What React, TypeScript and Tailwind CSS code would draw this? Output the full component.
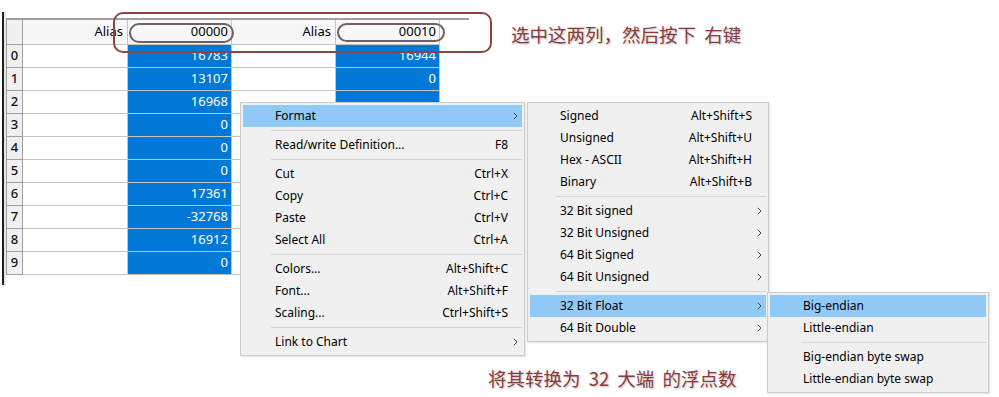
const col1 = ["16783", "13107", "16968", "0", "0", "0", "17361", "-32768", "16912", "0"];
const col2 = ["16944", "0", "", "", "", "", "", "", "", ""];

type Item = { label: string; keys?: string; sub?: boolean; on?: boolean } | "sep";

const formatMenu: Item[] = [
  { label: "Format", sub: true, on: true },
  "sep",
  { label: "Read/write Definition...", keys: "F8" },
  "sep",
  { label: "Cut", keys: "Ctrl+X" },
  { label: "Copy", keys: "Ctrl+C" },
  { label: "Paste", keys: "Ctrl+V" },
  { label: "Select All", keys: "Ctrl+A" },
  "sep",
  { label: "Colors...", keys: "Alt+Shift+C" },
  { label: "Font...", keys: "Alt+Shift+F" },
  { label: "Scaling...", keys: "Ctrl+Shift+S" },
  "sep",
  { label: "Link to Chart", sub: true },
];

const typeMenu: Item[] = [
  { label: "Signed", keys: "Alt+Shift+S" },
  { label: "Unsigned", keys: "Alt+Shift+U" },
  { label: "Hex - ASCII", keys: "Alt+Shift+H" },
  { label: "Binary", keys: "Alt+Shift+B" },
  "sep",
  { label: "32 Bit signed", sub: true },
  { label: "32 Bit Unsigned", sub: true },
  { label: "64 Bit Signed", sub: true },
  { label: "64 Bit Unsigned", sub: true },
  "sep",
  { label: "32 Bit Float", sub: true, on: true },
  { label: "64 Bit Double", sub: true },
];

const endianMenu: Item[] = [
  { label: "Big-endian", on: true },
  { label: "Little-endian" },
  "sep",
  { label: "Big-endian byte swap" },
  { label: "Little-endian byte swap" },
];

const Chevron = () => (
  <svg width="5" height="8" viewBox="0 0 5 8">
    <polyline points="0.8,0.8 4,4 0.8,7.2" fill="none" stroke="#4a4a4a" strokeWidth="1" />
  </svg>
);

// one popup menu, windows 10 style
const Menu = ({
  items,
  className,
  textPad,
  sepPad,
}: {
  items: Item[];
  className: string;
  textPad: string;
  sepPad: string;
}) => (
  <div
    className={`absolute bg-[#f0f0f0] border border-[#cccccc] p-[2px] text-[12px] text-black shadow-[1px_1px_2px_rgba(0,0,0,0.12)] ${className}`}
  >
    {items.map((item, i) =>
      item === "sep" ? (
        <div key={i} className={`h-[7px] flex items-center ${sepPad}`}>
          <div className="h-px w-full bg-[#d5d5d5]" />
        </div>
      ) : (
        <div
          key={i}
          className={`h-[22px] flex items-center ${textPad} ${item.on ? "bg-[#91c9f7]" : ""}`}
        >
          <span className="flex-1 whitespace-nowrap">{item.label}</span>
          {item.keys && <span className="whitespace-nowrap">{item.keys}</span>}
          <span className="w-[14px] flex justify-center">{item.sub && <Chevron />}</span>
        </div>
      )
    )}
  </div>
);

export default function App() {
  return (
    <div className="relative w-[999px] h-[397px] bg-white overflow-hidden font-['Noto_Sans',sans-serif]">
      {/* data grid */}
      <div className="flex pt-[12px] pl-[2px]">
        <div className="w-[2px] h-[273px] bg-[#1e1e1e]" />
        <div className="w-[2px] h-[273px] bg-[#e6e6e6]" />
        <div className="mt-[6px] w-[463px] h-[267px] border-t-2 border-[#a0a0a0] text-[13px]">
          <div className="flex h-[25px]">
            <div className="w-[17px] bg-[#f0f0f0] border-l border-r border-b border-[#a0a0a0]" />
            <div className="w-[105px] bg-[#f7f7f7] border-r border-b border-[#c4c4c4] flex items-center justify-end pr-[4px]">
              Alias
            </div>
            <div className="w-[104px] bg-[#f7f7f7] border-r border-b border-[#c4c4c4] flex items-center justify-end pr-[3px]">
              00000
            </div>
            <div className="w-[104px] bg-[#f7f7f7] border-r border-b border-[#c4c4c4] flex items-center justify-end pr-[4px]">
              Alias
            </div>
            <div className="w-[104px] bg-[#f7f7f7] border-r border-b border-[#c4c4c4] flex items-center justify-end pr-[3px]">
              00010
            </div>
          </div>
          {col1.map((v, i) => (
            <div key={i} className="flex h-[23px]">
              <div className="w-[17px] bg-[#f0f0f0] border-l border-r border-b border-[#a0a0a0] flex items-center justify-center font-medium text-[#111]">
                {i}
              </div>
              <div className="w-[105px] border-r border-b border-[#c4c4c4]" />
              <div className="w-[104px] bg-[#0078d7] text-white border-r border-b border-[#c4c4c4] flex items-center justify-end pr-[3px]">
                {v}
              </div>
              <div className="w-[104px] border-r border-b border-[#c4c4c4]" />
              <div className="w-[104px] bg-[#0078d7] text-white border-r border-b border-[#c4c4c4] flex items-center justify-end pr-[3px]">
                {col2[i]}
              </div>
            </div>
          ))}
        </div>
      </div>

      {/* annotation marks */}
      <div className="absolute left-[113px] top-[12px] w-[379px] h-[41px] border-2 border-[#8a4444] rounded-[10px]" />
      <div className="absolute left-[129px] top-[23px] w-[105px] h-[20px] border-2 border-[#6e6262] rounded-full" />
      <div className="absolute left-[337px] top-[23px] w-[108px] h-[19px] border-2 border-[#6e6262] rounded-full" />
      <div className="absolute left-[511px] top-[23px] leading-[22px] text-[18.5px] text-[#8a3c3c] [word-spacing:4px] [text-shadow:1px_1px_2px_rgba(0,0,0,0.25)] font-['Noto_Sans_CJK_SC',sans-serif] whitespace-nowrap">
        选中这两列，然后按下 右键
      </div>
      <div className="absolute left-[488px] top-[367px] leading-[22px] text-[18.5px] text-[#8a3c3c] [word-spacing:4px] [text-shadow:1px_1px_2px_rgba(0,0,0,0.25)] font-['Noto_Sans_CJK_SC',sans-serif] whitespace-nowrap">
        将其转换为 32 大端 的浮点数
      </div>

      {/* context menus */}
      <Menu items={formatMenu} className="left-[240px] top-[102px] w-[285px]" textPad="pl-[32px]" sepPad="pl-[28px]" />
      <Menu items={typeMenu} className="left-[527px] top-[102px] w-[242px]" textPad="pl-[30px]" sepPad="pl-[26px]" />
      <Menu items={endianMenu} className="left-[767px] top-[292px] w-[222px]" textPad="pl-[33px]" sepPad="pl-[31px]" />
    </div>
  );
}
